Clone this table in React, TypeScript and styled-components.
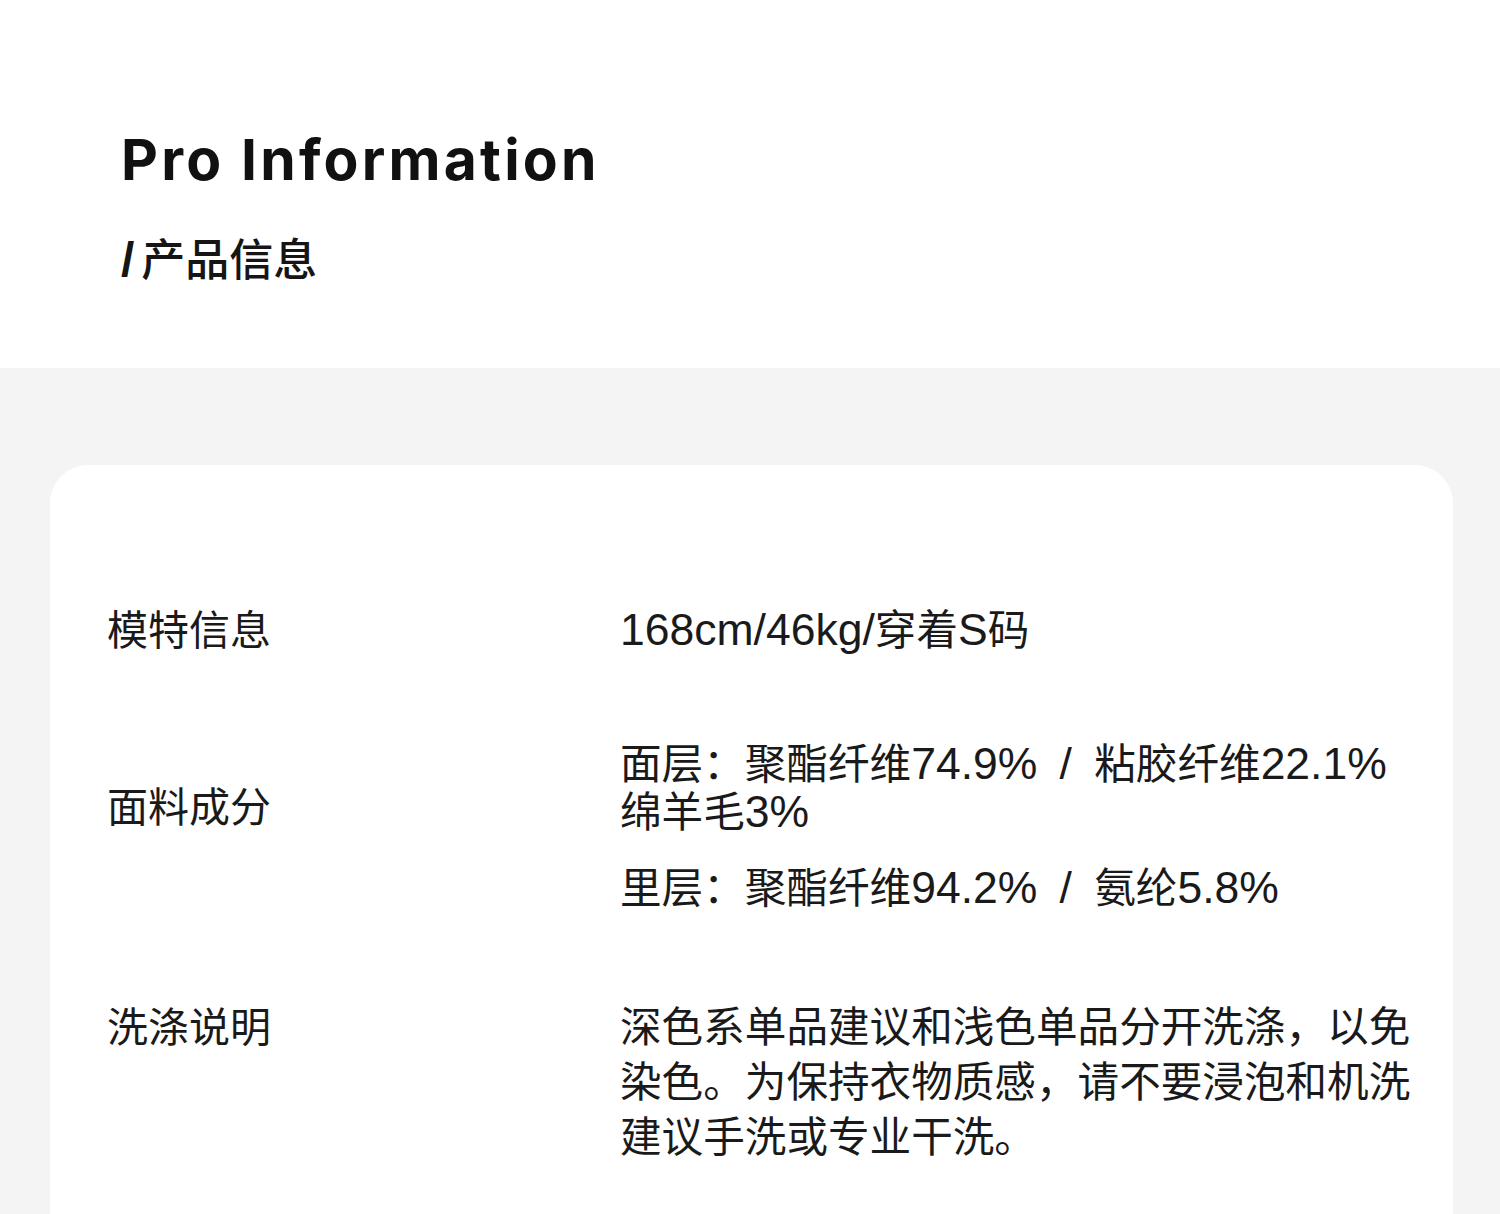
import React from "react";
import styled, { createGlobalStyle } from "styled-components";

const GlobalStyle = createGlobalStyle`
  html, body {
    margin: 0;
    padding: 0;
    background: #f4f4f4;
  }
  body {
    font-family: "Liberation Sans", "Noto Sans CJK SC", sans-serif;
    color: #1a1a1a;
  }
  * { box-sizing: border-box; }
`;

const Page = styled.div`
  width: 1500px;
  min-height: 1214px;
  display: flex;
  flex-direction: column;
  background: #f4f4f4;
  overflow: hidden;
`;

const Header = styled.header`
  background: #ffffff;
  height: 368px;
  padding: 128px 0 0 121px;
  display: flex;
  flex-direction: column;
`;

const Title = styled.h1`
  margin: 0;
  font-family: "Inter", "Lato", "Liberation Sans", sans-serif;
  font-weight: 700;
  font-size: 57px;
  line-height: 64px;
  color: #111111;
  letter-spacing: 3.2px;
`;

const Subtitle = styled.h2`
  margin: 41px 0 0 0;
  font-family: "Noto Sans CJK SC", sans-serif;
  font-weight: 500;
  font-size: 44px;
  line-height: 48px;
  color: #151515;
`;

const Slash = styled.span`
  font-family: "Liberation Sans", sans-serif;
  font-weight: 700;
  font-size: 48px;
  line-height: 0;
  margin-right: 7px;
`;

const Body = styled.main`
  flex: 1;
  padding: 97px 47px 0 50px;
  display: flex;
`;

const Card = styled.section`
  flex: 1;
  background: #ffffff;
  border-radius: 38px 38px 0 0;
  padding: 138px 0 80px 57px;
  display: flex;
  flex-direction: column;
  gap: 86px;
`;

const Row = styled.div<{ $shift?: number }>`
  display: flex;
  align-items: flex-start;
  margin-top: ${(p) => p.$shift ?? 0}px;
`;

const Label = styled.div<{ $lh: number; $offset?: number }>`
  width: 513px;
  flex-shrink: 0;
  font-family: "Noto Sans CJK SC", sans-serif;
  font-size: 41px;
  line-height: ${(p) => p.$lh}px;
  padding-top: ${(p) => p.$offset ?? 0}px;
  color: #1a1a1a;
`;

const Value = styled.div<{ $lh: number }>`
  width: 812px;
  font-family: "Noto Sans CJK SC", sans-serif;
  font-size: 41.6px;
  line-height: ${(p) => p.$lh}px;
  color: #1a1a1a;
  display: flex;
  flex-direction: column;
  gap: 28px;
`;

const Para = styled.p`
  margin: 0;
`;

const Latin = styled.span`
  font-family: "Liberation Sans", sans-serif;
  font-size: 44.5px;
  line-height: 0;
`;

export default function App() {
  return (
    <>
      <GlobalStyle />
      <Page>
        <Header>
          <Title>Pro Information</Title>
          <Subtitle>
            <Slash>/</Slash>产品信息
          </Subtitle>
        </Header>
        <Body>
          <Card>
            <Row>
              <Label $lh={48}>模特信息</Label>
              <Value $lh={48}>
                <Para>
                  <Latin>168cm/46kg/</Latin>穿着<Latin>S</Latin>码
                </Para>
              </Value>
            </Row>
            <Row>
              <Label $lh={48} $offset={43}>面料成分</Label>
              <Value $lh={48}>
                <Para>
                  面层：聚酯纤维<Latin>74.9%{"\u2002/\u2002"}</Latin>粘胶纤维<Latin>22.1%</Latin>
                  <br />
                  绵羊毛<Latin>3%</Latin>
                </Para>
                <Para>
                  里层：聚酯纤维<Latin>94.2%{"\u2002/\u2002"}</Latin>氨纶<Latin>5.8%</Latin>
                </Para>
              </Value>
            </Row>
            <Row $shift={2}>
              <Label $lh={55}>洗涤说明</Label>
              <Value $lh={55}>
                <Para>深色系单品建议和浅色单品分开洗涤，以免染色。为保持衣物质感，请不要浸泡和机洗建议手洗或专业干洗。</Para>
              </Value>
            </Row>
          </Card>
        </Body>
      </Page>
    </>
  );
}
